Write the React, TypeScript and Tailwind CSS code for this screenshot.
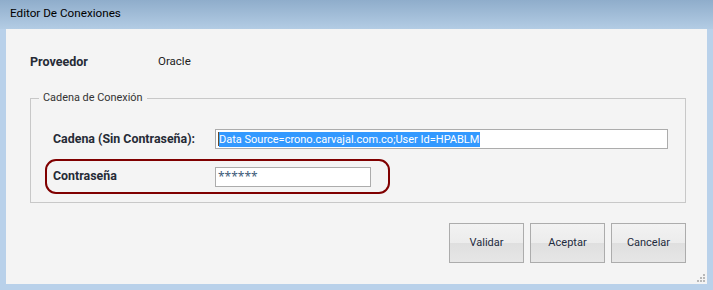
const font = { fontFamily: 'Roboto, "Noto Sans", sans-serif' };

function WinButton({ label }: { label: string }) {
  return (
    <button className="h-[40px] w-[75px] border border-[#acacac] bg-[linear-gradient(#f2f2f2_0%,#ececec_50%,#dfdfdf_50%,#e6e6e6_100%)] text-[11px] text-[#1e2b3d]">
      {label}
    </button>
  );
}

function ResizeGrip() {
  const dots = [
    [6, 0],
    [6, 3],
    [3, 3],
    [6, 6],
    [3, 6],
    [0, 6],
  ];
  return (
    <svg width="8" height="8" viewBox="0 0 8 8" className="absolute bottom-[2px] right-[2px]">
      {dots.map(([x, y]) => (
        <rect key={`${x}-${y}`} x={x} y={y} width="2" height="2" fill="#b8b8b8" />
      ))}
    </svg>
  );
}

export default function App() {
  return (
    <div style={font} className="flex h-[290px] w-[713px] flex-col bg-[#b9d1ea] text-[11.5px] text-[#262b36]">
      <div className="flex h-[29px] shrink-0 items-center bg-[linear-gradient(#8fadcb,#b3cce4)] px-[10px] pb-[1px] text-[11.7px] text-black">
        Editor De Conexiones
      </div>

      <div className="relative mx-[6px] mb-[6px] flex flex-1 flex-col bg-[#f4f4f4] px-[24px]">
        <div className="mt-[24px] flex h-[18px] items-center">
          <span className="w-[128px] shrink-0 text-[12.5px] font-bold">Proveedor</span>
          <span className="text-[#222]">Oracle</span>
        </div>

        <div className="relative mt-[27px] h-[105px] w-[656px] border border-[#c8c8c8]">
          <span className="absolute left-[8px] top-[-9px] bg-[#f4f4f4] px-[4px] text-[10.9px] leading-[16px] text-[#333]">
            Cadena de Conexión
          </span>

          <div className="ml-[22px] mt-[30px] flex items-center">
            <span className="w-[162px] shrink-0 text-[12.4px] font-bold">Cadena (Sin Contraseña):</span>
            <div className="flex h-[20px] w-[453px] items-center border border-[#acacac] bg-white px-[2px] text-[11px]">
              <span className="h-[14px] w-[1px] bg-[#6a4a2a]" />
              <span className="bg-[#3399ff] pr-[1px] leading-[15px] text-white">
                Data Source=crono.carvajal.com.co;User Id=HPABLM
              </span>
            </div>
          </div>

          <div className="ml-[14px] mt-[10px] flex h-[35px] w-[345px] items-center rounded-[11px] border-2 border-[#800000] pl-[6px]">
            <span className="w-[162px] shrink-0 text-[12.4px] font-bold">Contraseña</span>
            <div className="flex h-[20px] w-[156px] items-center border border-[#acacac] bg-white px-[2px] text-[12px] text-[#3d5a78]" style={{ fontFamily: '"Noto Sans", sans-serif' }}>
              ******
            </div>
          </div>
        </div>

        <div className="mr-[-3px] mt-[20px] flex justify-end gap-[6px]">
          <WinButton label="Validar" />
          <WinButton label="Aceptar" />
          <WinButton label="Cancelar" />
        </div>

        <ResizeGrip />
      </div>
    </div>
  );
}
